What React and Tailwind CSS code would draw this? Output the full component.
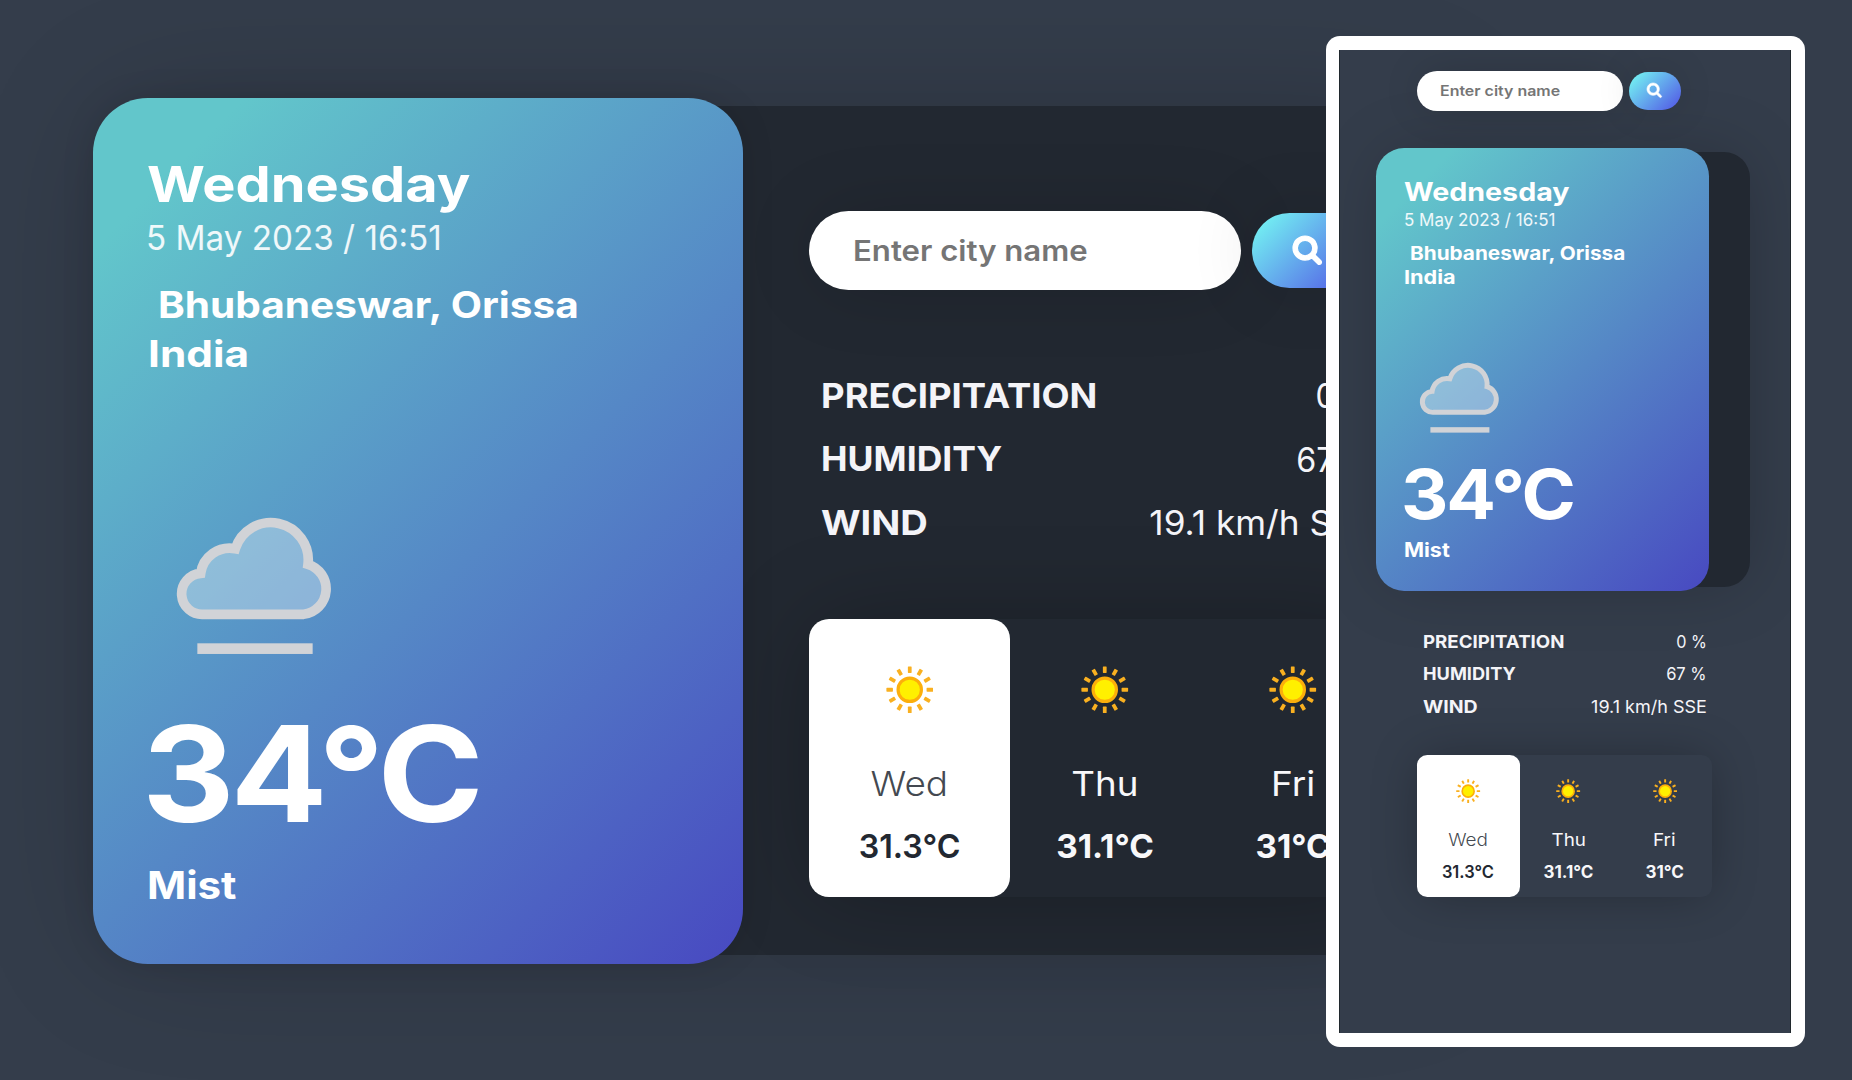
import React from "react";

const forecast = [
  { day: "Wed", temp: "31.3°C" },
  { day: "Thu", temp: "31.1°C" },
  { day: "Fri", temp: "31°C" },
];
const widths = ["w-[2.007em]", "w-[1.9em]", "w-[1.863em]"];
const dayScale = ["scale-x-[1.1]", "scale-x-[1.09]", "scale-x-[1.1]"];
const rays = [0, 30, 60, 90, 120, 150, 180, 210, 240, 270, 300, 330];

function SearchIcon() {
  return (
    <svg viewBox="64 128 1664 1664" className="h-[0.285em] w-[0.285em] overflow-visible" fill="#fff" stroke="#fff" strokeWidth="70">
      <path d="M1216 832q0-185-131.500-316.500t-316.500-131.500-316.500 131.500-131.500 316.500 131.500 316.500 316.500 131.500 316.500-131.500 131.500-316.500zm512 832q0 52-38 90t-90 38q-54 0-90-38l-343-342q-179 124-399 124-143 0-273.500-55.500t-225-150-150-225-55.500-273.500 55.500-273.500 150-225 225-150 273.500-55.500 273.500 55.500 225 150 150 225 55.500 273.500q0 220-124 399l343 343q37 37 37 90z" />
    </svg>
  );
}

function SunIcon() {
  return (
    <svg viewBox="-24 -24 48 48" className="h-[0.475em] w-[0.475em]">
      {rays.map((r) => (
        <rect key={r} x="-1.9" y="-23.600" width="3.800" height="6.600" rx="0.600" fill="#f9b020" transform={`rotate(${r})`} />
      ))}
      <circle r="11.800" fill="#fff000" stroke="#fcaf0b" strokeWidth="3.200" />
    </svg>
  );
}

function CloudIcon() {
  return (
    <svg viewBox="0 0 459 415" className="ml-[0.333em] mt-[1.383em] h-[1.383em] w-[1.53em] shrink-0 overflow-visible">
      <path
        d="M74 295A61 61 0 0 1 65 172A88 88 0 0 1 169 98A112 112 0 0 1 387 145A77 77 0 0 1 374 295Z"
        fill="#fff"
        fillOpacity="0.320"
        stroke="#d1d3d7"
        strokeWidth="29"
      />
      <rect x="55" y="382" width="346" height="32" fill="#d1d3d7" />
    </svg>
  );
}

function Search({ inputWidth, buttonWidth }) {
  return (
    <div className="flex items-center gap-[0.11em]">
      <div className={`flex h-[0.787em] shrink-0 items-center rounded-full bg-white pl-[0.44em] shadow-[0_0_0.8em_-0.1em_rgba(0,0,0,0.2)] ${inputWidth}`}>
        <span className="relative top-[0.03em] origin-left scale-x-[1.112] whitespace-nowrap text-[0.28em] font-semibold leading-none text-[#757575]">
          Enter city name
        </span>
      </div>
      <button className={`flex h-[0.746em] shrink-0 items-center justify-center rounded-full bg-[linear-gradient(135deg,#72edf2_10%,#5151e5_100%)] shadow-[0_0_0.8em_-0.1em_rgba(0,0,0,0.2)] ${buttonWidth}`}>
        <SearchIcon />
      </button>
    </div>
  );
}

function WeatherCard() {
  return (
    <section className="relative flex h-[8.66em] w-[6.5em] shrink-0 flex-col overflow-hidden rounded-[0.55em] bg-[linear-gradient(135deg,#62c6cb_10%,#4849c1_100%)] pl-[0.53em] pt-[0.567em] text-white">
      <div className="ml-[0.01em] flex h-[0.6em] items-center">
        <h1 className="origin-left scale-x-[1.117] text-[0.5em] font-bold leading-none">Wednesday</h1>
      </div>
      <div className="mt-[0.015em] flex h-[0.46em] items-center">
        <span className="origin-left scale-x-[0.963] whitespace-nowrap text-[0.345em] leading-none text-white/90">5 May 2023 / 16:51</span>
      </div>
      <div className="ml-[0.12em] mt-[0.193em] flex h-[0.48em] items-center">
        <span className="origin-left scale-x-[1.111] whitespace-nowrap text-[0.365em] font-bold leading-none">Bhubaneswar, Orissa</span>
      </div>
      <div className="ml-[0.015em] flex h-[0.484em] items-center">
        <span className="origin-left scale-x-[1.144] text-[0.37em] font-bold leading-none">India</span>
      </div>
      <CloudIcon />
      <div className="-ml-[0.04em] mt-[0.5em] flex h-[1.4em] items-center">
        <h2 className="origin-left scale-x-[1.08] text-[1.33em] font-bold leading-none tracking-[-0.03em]">34°C</h2>
      </div>
      <div className="ml-[0.01em] mt-[0.215em] flex h-[0.4em] items-center">
        <h3 className="origin-left scale-x-[1.106] text-[0.38em] font-bold leading-none">Mist</h3>
      </div>
    </section>
  );
}

function Stat({ label, labelScale, value, valueScale }) {
  return (
    <div className="flex h-[0.635em] items-center justify-between pl-[0.115em] pr-[0.09em] text-[#f4f4f8]">
      <span className={`origin-left text-[0.345em] font-bold leading-none ${labelScale}`}>{label}</span>
      <span className={`origin-right whitespace-nowrap text-[0.34em] leading-none ${valueScale}`}>{value}</span>
    </div>
  );
}

function Stats() {
  return (
    <div className="w-[5.75em]">
      <Stat label="PRECIPITATION" labelScale="scale-x-[1.057]" value="0 %" valueScale="scale-x-[0.93]" />
      <Stat label="HUMIDITY" labelScale="scale-x-[1.03]" value="67 %" valueScale="scale-x-[0.95]" />
      <Stat label="WIND" labelScale="scale-x-[1.105]" value="19.1 km/h SSE" valueScale="scale-x-[1.035]" />
    </div>
  );
}

function Forecast({ surface }) {
  return (
    <div className={`flex h-[2.777em] w-[5.76em] rounded-[0.2em] shadow-[0_0_0.98em_-0.1em_rgba(0,0,0,0.3)] ${surface}`}>
      {forecast.map((f, i) => (
        <div
          key={f.day}
          className={`flex shrink-0 flex-col items-center rounded-[0.2em] pt-[0.47em] ${widths[i]} ${i === 0 ? "bg-white text-[#222831]" : "text-[#f8f8fa]"}`}
        >
          <SunIcon />
          <div className="mt-[0.455em] flex h-[0.5em] items-center">
            <span className={`text-[0.337em] leading-none ${dayScale[i]} ${i === 0 ? "font-light text-[#222831]/85" : ""}`}>{f.day}</span>
          </div>
          <div className="mt-[0.13em] flex h-[0.5em] items-center">
            <span className={`text-[0.333em] leading-none ${i === 0 ? "scale-x-[0.967] font-semibold" : "font-bold"}`}>{f.temp}</span>
          </div>
        </div>
      ))}
    </div>
  );
}

function Desktop() {
  return (
    <main className="pl-[103px] pt-[106px] text-[100px] leading-none">
      <div className="flex h-[849px] w-[1340px] items-start rounded-[49px] bg-[#222831] shadow-[0_0_137px_-10px_rgba(0,0,0,0.22)]">
        <div className="-ml-2.5 -mt-[8.5px] rounded-[55px] shadow-[0_0_40px_-10px_rgba(0,0,0,0.2)]">
          <WeatherCard />
        </div>
        <div className="flex flex-col pl-[66.3px] pt-[105px]">
          <Search inputWidth="w-[4.314em]" buttonWidth="w-[1.11em]" />
          <div className="mt-[74.600px]">
            <Stats />
          </div>
          <div className="mt-[64.3px]">
            <Forecast surface="bg-[#222831]" />
          </div>
        </div>
      </div>
    </main>
  );
}

function Phone() {
  return (
    <aside className="absolute left-[1325.5px] top-[36px] h-[1011px] w-[479px] rounded-[14px] bg-white px-[13.5px] py-[14px]">
      <div className="h-full w-full overflow-hidden border-x border-[#20282d] bg-[#343d4b] text-[51.2px] leading-none">
        <div className="ml-[77px] mt-[20.6px]">
          <Search inputWidth="w-[4.023em]" buttonWidth="w-[1.02em]" />
        </div>
        <div className="ml-[41px] mt-[41.4px] flex h-[434.600px] w-[368.500px] items-start rounded-[26px] bg-[#222831] shadow-[0_0_70px_-10px_rgba(0,0,0,0.25)]">
          <div className="-ml-[4.600px] -mt-[4.6px]">
            <WeatherCard />
          </div>
        </div>
        <div className="ml-[77px] mt-[38.300px]">
          <Stats />
        </div>
        <div className="ml-[77px] mt-[32.500px]">
          <Forecast surface="bg-[#343d4b]" />
        </div>
      </div>
    </aside>
  );
}

export default function App() {
  return (
    <div className="relative h-[1080px] w-[1852px] overflow-hidden bg-[#343d4b] font-['Inter',sans-serif]">
      <Desktop />
      <Phone />
    </div>
  );
}
